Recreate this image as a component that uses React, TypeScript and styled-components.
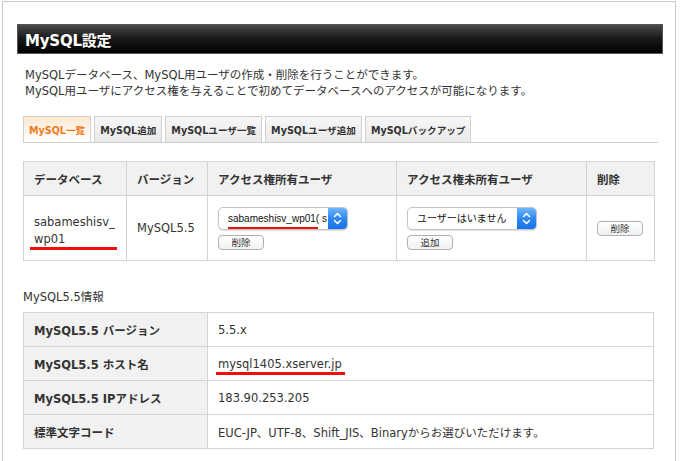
import styled, { createGlobalStyle } from 'styled-components'

const GlobalStyle = createGlobalStyle`
  html, body {
    margin: 0;
    padding: 0;
    background: #fff;
  }
  body {
    font-family: "DejaVu Sans", "Noto Sans CJK JP", sans-serif;
    font-size: 11.5px;
    color: #333;
  }
`

const Frame = styled.div`
  box-sizing: border-box;
  width: 674px;
  min-height: 480px;
  margin: 1px 0 0 2px;
  padding: 22px 12px 0 14px;
  border: 1px solid #c8c8c8;
  border-bottom: none;
`

const TitleBar = styled.h1`
  box-sizing: border-box;
  width: 646px;
  height: 30px;
  margin: 0;
  padding: 0 7px;
  display: flex;
  align-items: center;
  border: 1px solid #555;
  background: linear-gradient(#4a4a4a, #1c1c1c 45%, #000);
  color: #fff;
  font-size: 15px;
  font-weight: bold;
  letter-spacing: -0.2px;
`

const Content = styled.div`
  padding-left: 6px;
`

const Lead = styled.p`
  margin: 13px 0 0 2px;
  line-height: 16px;
`

const TabBar = styled.ul`
  display: flex;
  gap: 3px;
  width: 635px;
  margin: 17px 0 0;
  padding: 0;
  list-style: none;
  border-bottom: 1px solid #cfcfcf;
`

const Tab = styled.li<{ $active?: boolean }>`
  box-sizing: border-box;
  height: 26px;
  padding: 0 5px;
  display: flex;
  align-items: center;
  border: 1px solid #d0d0d0;
  border-bottom: none;
  background: ${(p) => (p.$active ? 'linear-gradient(#fde7cf, #fff8f0 60%, #fff)' : 'linear-gradient(#f7f7f7, #e9e9e9)')};
  color: ${(p) => (p.$active ? '#f07b1c' : '#333')};
  font-size: 9.6px;
  font-weight: bold;
  white-space: nowrap;
`

const Grid = styled.table<{ $top: number }>`
  width: 631px;
  margin-top: ${(p) => p.$top}px;
  border-collapse: collapse;
  table-layout: fixed;

  th,
  td {
    box-sizing: border-box;
  }
`

const HeadCell = styled.th<{ $w: number }>`
  width: ${(p) => p.$w}px;
  height: 34px;
  padding: 0 10px;
  border: 1px solid #d4d4d4;
  background: #f1f1f1;
  text-align: left;
  font-weight: bold;
  white-space: nowrap;
`

const Cell = styled.td<{ $shift?: number }>`
  position: relative;
  height: 65px;
  padding: ${(p) => p.$shift ?? 0}px 10px 0;
  border: 1px solid #d4d4d4;
  line-height: 17px;
  vertical-align: middle;
`

const InfoLabel = styled.th`
  width: 184px;
  height: 34px;
  padding: 0 10px;
  border: 1px solid #d4d4d4;
  background: #f1f1f1;
  text-align: left;
  font-weight: bold;
  white-space: nowrap;
`

const InfoValue = styled.td`
  position: relative;
  padding: 0 10px;
  border: 1px solid #d4d4d4;
  white-space: nowrap;
`

const Heading = styled.h2`
  margin: 28px 0 0;
  font-size: 11.5px;
  font-weight: normal;
  line-height: 16px;
`

const Stack = styled.div`
  display: flex;
  flex-direction: column;
  align-items: flex-start;
  gap: 5px;
`

const Select = styled.div`
  position: relative;
  box-sizing: border-box;
  width: 130px;
  height: 23px;
  display: flex;
  border: 1px solid #c4c4c4;
  border-radius: 5px;
  background: #fff;
  box-shadow: 0 1px 1px rgba(0, 0, 0, 0.12);
  overflow: hidden;
`

const SelectText = styled.span`
  flex: 1;
  padding-left: 9px;
  font-family: "Liberation Sans", "Noto Sans CJK JP", sans-serif;
  font-size: 10px;
  line-height: 21px;
  color: #111;
  white-space: nowrap;
  overflow: hidden;
`

const Stepper = styled.span`
  width: 19px;
  flex: none;
  display: flex;
  align-items: center;
  justify-content: center;
  background: linear-gradient(#6db4fb, #2a86f2 55%, #1873e8);
`

const SmallButton = styled.button`
  box-sizing: border-box;
  width: 46px;
  height: 15px;
  padding: 0;
  border: 1px solid #b0b0b0;
  border-radius: 4px;
  background: linear-gradient(#fff, #f0f0f0);
  font-family: inherit;
  font-size: 9.5px;
  line-height: 13px;
  color: #333;
`

const Marker = styled.span<{ $left: number; $top: number; $w: number }>`
  position: absolute;
  left: ${(p) => p.$left}px;
  top: ${(p) => p.$top}px;
  width: ${(p) => p.$w}px;
  height: 3px;
  background: #f20d0d;
`

function StepperIcon() {
  return (
    <svg width="9" height="13" viewBox="0 0 9 13" fill="none" stroke="#fff" strokeWidth="1.6" strokeLinecap="round" strokeLinejoin="round">
      <path d="M1.5 4.5 L4.5 1.5 L7.5 4.5" />
      <path d="M1.5 8.5 L4.5 11.5 L7.5 8.5" />
    </svg>
  )
}

const tabs = ['MySQL一覧', 'MySQL追加', 'MySQLユーザ一覧', 'MySQLユーザ追加', 'MySQLバックアップ']

const info = [
  ['MySQL5.5 バージョン', '5.5.x'],
  ['MySQL5.5 ホスト名', 'mysql1405.xserver.jp'],
  ['MySQL5.5 IPアドレス', '183.90.253.205'],
  ['標準文字コード', 'EUC-JP、UTF-8、Shift_JIS、Binaryからお選びいただけます。'],
]

export default function App() {
  return (
    <>
      <GlobalStyle />
      <Frame>
        <TitleBar>MySQL設定</TitleBar>
        <Content>
          <Lead>
            MySQLデータベース、MySQL用ユーザの作成・削除を行うことができます。
            <br />
            MySQL用ユーザにアクセス権を与えることで初めてデータベースへのアクセスが可能になります。
          </Lead>

          <TabBar>
            {tabs.map((t, i) => (
              <Tab key={t} $active={i === 0}>
                {t}
              </Tab>
            ))}
          </TabBar>

          <Grid $top={18}>
            <thead>
              <tr>
                <HeadCell $w={103}>データベース</HeadCell>
                <HeadCell $w={81}>バージョン</HeadCell>
                <HeadCell $w={189}>アクセス権所有ユーザ</HeadCell>
                <HeadCell $w={190}>アクセス権未所有ユーザ</HeadCell>
                <HeadCell $w={68}>削除</HeadCell>
              </tr>
            </thead>
            <tbody>
              <tr>
                <Cell $shift={6}>
                  sabameshisv_
                  <br />
                  wp01
                  <Marker $left={6} $top={51} $w={87} />
                </Cell>
                <Cell>MySQL5.5</Cell>
                <Cell>
                  <Stack>
                    <Select>
                      <SelectText>sabameshisv_wp01( s</SelectText>
                      <Stepper>
                        <StepperIcon />
                      </Stepper>
                      <Marker $left={9} $top={19} $w={90} />
                    </Select>
                    <SmallButton>削除</SmallButton>
                  </Stack>
                </Cell>
                <Cell>
                  <Stack>
                    <Select>
                      <SelectText>ユーザーはいません</SelectText>
                      <Stepper>
                        <StepperIcon />
                      </Stepper>
                    </Select>
                    <SmallButton>追加</SmallButton>
                  </Stack>
                </Cell>
                <Cell>
                  <SmallButton>削除</SmallButton>
                </Cell>
              </tr>
            </tbody>
          </Grid>

          <Heading>MySQL5.5情報</Heading>

          <Grid $top={7}>
            <tbody>
              {info.map(([label, value], i) => (
                <tr key={label}>
                  <InfoLabel>{label}</InfoLabel>
                  <InfoValue>
                    {value}
                    {i === 1 && <Marker $left={8} $top={25} $w={129} />}
                  </InfoValue>
                </tr>
              ))}
            </tbody>
          </Grid>
        </Content>
      </Frame>
    </>
  )
}
